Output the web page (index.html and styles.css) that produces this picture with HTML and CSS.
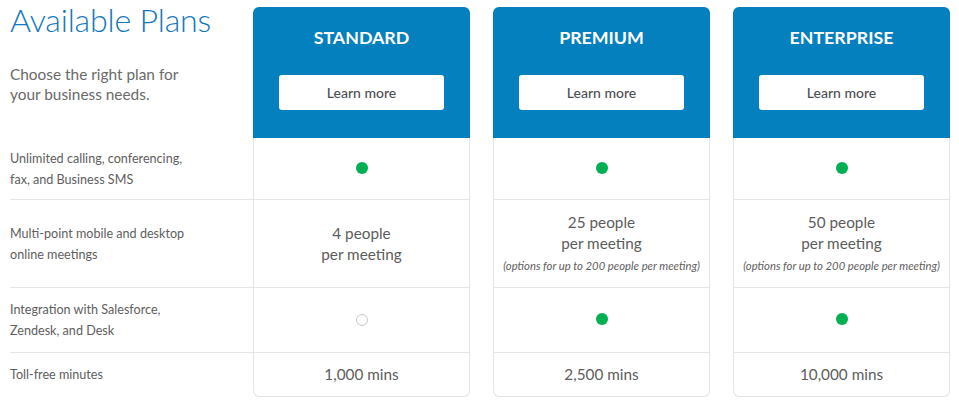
FILE: index.html
```html
<!DOCTYPE html>
<html lang="en">
<head>
<meta charset="utf-8">
<title>Available Plans</title>
<link rel="stylesheet" href="styles.css">
</head>
<body>
<div class="plans">
  <div class="labels">
    <div class="label-head">
      <h1 class="title">Available Plans</h1>
      <p class="subtitle">Choose the right plan for<br>your business needs.</p>
    </div>
    <div class="row r1 label">Unlimited calling, conferencing,<br>fax, and Business SMS</div>
    <div class="row r2 label">Multi-point mobile and desktop<br>online meetings</div>
    <div class="row r3 label">Integration with Salesforce,<br>Zendesk, and Desk</div>
    <div class="row r4 label last">Toll-free minutes</div>
  </div>

  <div class="card">
    <div class="card-head">
      <div class="plan-name">STANDARD</div>
      <a class="btn">Learn more</a>
    </div>
    <div class="card-body">
      <div class="row r1 cell"><span class="dot"></span></div>
      <div class="row r2 cell"><div class="value">4 people<br>per meeting</div></div>
      <div class="row r3 cell"><span class="dot empty"></span></div>
      <div class="row r4 cell last"><div class="value">1,000 mins</div></div>
    </div>
  </div>

  <div class="card">
    <div class="card-head">
      <div class="plan-name">PREMIUM</div>
      <a class="btn">Learn more</a>
    </div>
    <div class="card-body">
      <div class="row r1 cell"><span class="dot"></span></div>
      <div class="row r2 cell"><div class="value">25 people<br>per meeting</div><div class="note">(options for up to 200 people per meeting)</div></div>
      <div class="row r3 cell"><span class="dot"></span></div>
      <div class="row r4 cell last"><div class="value">2,500 mins</div></div>
    </div>
  </div>

  <div class="card">
    <div class="card-head">
      <div class="plan-name">ENTERPRISE</div>
      <a class="btn">Learn more</a>
    </div>
    <div class="card-body">
      <div class="row r1 cell"><span class="dot"></span></div>
      <div class="row r2 cell"><div class="value">50 people<br>per meeting</div><div class="note">(options for up to 200 people per meeting)</div></div>
      <div class="row r3 cell"><span class="dot"></span></div>
      <div class="row r4 cell last"><div class="value">10,000 mins</div></div>
    </div>
  </div>
</div>
</body>
</html>
```

FILE: styles.css
```css
* { box-sizing: border-box; }

html, body {
  margin: 0;
  padding: 0;
  background: #ffffff;
}

body {
  font-family: Lato, "Open Sans", "Liberation Sans", sans-serif;
  color: #5c5c5c;
}

.plans {
  display: flex;
  align-items: flex-start;
  padding: 7px 0 0 10px;
}

.labels {
  width: 243px;
  display: flex;
  flex-direction: column;
}

.label-head {
  margin-top: -7px;
  height: 138px;
}

.title {
  margin: 0;
  font-weight: 300;
  font-size: 32.2px;
  line-height: 40px;
  color: #1477bd;
  letter-spacing: -0.2px;
}

.subtitle {
  margin: 24px 0 0;
  font-size: 15.4px;
  line-height: 20px;
  color: #6a6a6a;
}

.row {
  display: flex;
  align-items: center;
  border-bottom: 1px solid #e6e6e6;
}

.row.last { border-bottom: none; }

.r1 { height: 62px; }
.r2 { height: 88px; }
.r3 { height: 65px; }
.r4 { height: 43px; }

.label {
  font-size: 12.6px;
  line-height: 21px;
  color: #5e5e5e;
}

.card {
  width: 217px;
  display: flex;
  flex-direction: column;
}

.card + .card { margin-left: 23px; }

.card-head {
  height: 131px;
  background: #0480be;
  border-radius: 6px 6px 0 0;
  display: flex;
  flex-direction: column;
  align-items: center;
  padding-top: 19px;
}

.plan-name {
  color: #ffffff;
  font-weight: 700;
  font-size: 17.8px;
  line-height: 22px;
}

.btn {
  margin-top: 27px;
  width: 165px;
  height: 35px;
  background: #ffffff;
  border-radius: 3px;
  display: flex;
  align-items: center;
  justify-content: center;
  font-size: 14px;
  font-weight: 500;
  color: #4f4f55;
}

.card-body {
  border: 1px solid #e3e3e3;
  border-top: none;
  border-radius: 0 0 6px 6px;
  display: flex;
  flex-direction: column;
}

.cell {
  flex-direction: column;
  justify-content: center;
  text-align: center;
}

.value {
  font-size: 15.3px;
  line-height: 21px;
  color: #5c5c5c;
}

.note {
  margin-top: 2px;
  font-size: 11.3px;
  line-height: 20px;
  font-style: italic;
  color: #606060;
}

.dot {
  display: block;
  width: 12px;
  height: 12px;
  border-radius: 50%;
  background: #00b050;
  margin-top: -2px;
}

.dot.empty {
  background: #ffffff;
  border: 1px solid #c9c9c9;
  margin-top: 0;
}
```
